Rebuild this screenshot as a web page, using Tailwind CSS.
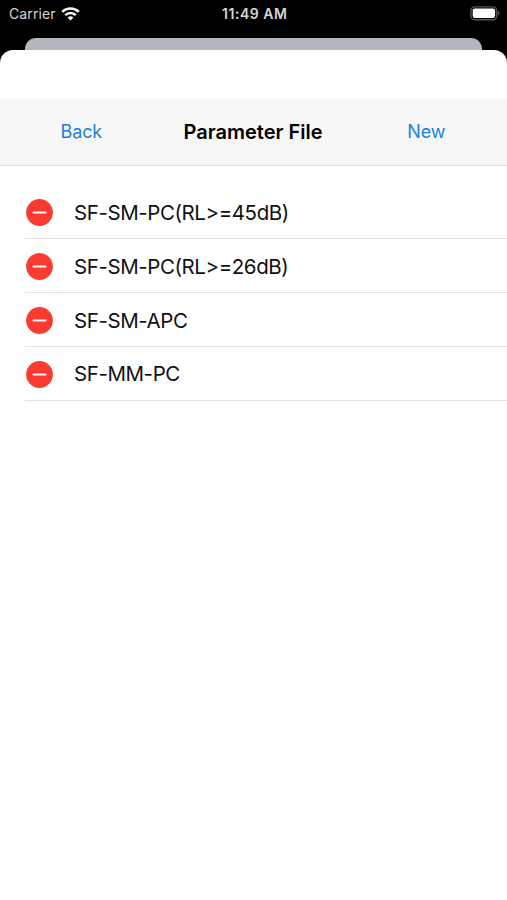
<!DOCTYPE html>
<html lang="en">
<head>
<meta charset="utf-8">
<title>Parameter File</title>
<script src="https://cdn.jsdelivr.net/npm/@tailwindcss/browser@4"></script>
</head>
<body class="bg-black">
<div class="flex h-[900px] w-[507px] flex-col overflow-hidden bg-black font-['Inter','Liberation_Sans',sans-serif] text-[#111]">
  <header class="grid h-[38px] shrink-0 grid-cols-3 pr-[6.5px] pl-[9px] text-[#d6d6d6]">
    <div class="flex h-[27px] items-center gap-[5.5px]">
      <span class="text-[14px] tracking-[0.1px]">Carrier</span>
      <svg class="h-[14px] w-[19px]" viewBox="0 0 19 14" fill="none" stroke="#f4f4f4" stroke-width="2.5">
        <path d="M1.2 4.9a11.8 11.8 0 0 1 16.6 0"/>
        <path d="M4.2 8.2a7.5 7.5 0 0 1 10.6 0"/>
        <path d="M9.5 13.5 6.6 10.6a4.1 4.1 0 0 1 5.8 0z" fill="#f4f4f4" stroke="none"/>
      </svg>
    </div>
    <div class="flex h-[26px] items-center justify-center text-[14px] font-semibold tracking-[0.55px]">11:49 AM</div>
    <div class="flex h-[27px] items-center justify-end">
      <svg class="h-[15px] w-[30px]" viewBox="0 0 30 15">
        <rect x="0.9" y="0.9" width="25.8" height="12.8" rx="3.8" fill="none" stroke="#555" stroke-width="1.4"/>
        <rect x="2.7" y="2.4" width="22.4" height="9.6" rx="2.2" fill="#fff"/>
        <path d="M28 5c1.8.6 1.8 4 0 4.6z" fill="#666"/>
      </svg>
    </div>
  </header>
  <div class="mx-[25px] h-[12px] shrink-0 rounded-t-[11px] bg-[#b4b6bd]"></div>
  <main class="flex-1 rounded-t-[13px] bg-white pt-[48px]">
    <nav class="flex h-[68px] items-center justify-between border-b border-[#dcdcdc] bg-[#f7f7f7] pr-[61.5px] pl-[60.5px]">
      <button class="w-[83px] text-left text-[18px] tracking-[-0.1px] text-[#1e80d6]">Back</button>
      <h1 class="text-[20px] font-semibold whitespace-nowrap text-black">Parameter File</h1>
      <button class="w-[83px] text-right text-[18px] tracking-[-0.1px] text-[#1e80d6]">New</button>
    </nav>
    <ul class="ml-[25px] pt-[19.5px] text-[20.5px] tracking-[-0.42px]">
      <li class="flex h-[53.9px] items-center gap-[21px] border-b border-[#e2e3e4] pt-[1.4px] pl-px">
        <svg class="size-[27px]" viewBox="0 0 27 27"><circle cx="13.5" cy="13.5" r="13.4" fill="#fb3b30"/><path d="M7.5 13.5h12" stroke="#fff" stroke-width="2" stroke-linecap="round"/></svg>
        <span class="pt-px">SF-SM-PC(RL&gt;=45dB)</span>
      </li>
      <li class="flex h-[53.9px] items-center gap-[21px] border-b border-[#e2e3e4] pt-[1.4px] pl-px">
        <svg class="size-[27px]" viewBox="0 0 27 27"><circle cx="13.5" cy="13.5" r="13.4" fill="#fb3b30"/><path d="M7.5 13.5h12" stroke="#fff" stroke-width="2" stroke-linecap="round"/></svg>
        <span class="pt-px">SF-SM-PC(RL&gt;=26dB)</span>
      </li>
      <li class="flex h-[53.9px] items-center gap-[21px] border-b border-[#e2e3e4] pt-[1.4px] pl-px">
        <svg class="size-[27px]" viewBox="0 0 27 27"><circle cx="13.5" cy="13.5" r="13.4" fill="#fb3b30"/><path d="M7.5 13.5h12" stroke="#fff" stroke-width="2" stroke-linecap="round"/></svg>
        <span class="pt-px">SF-SM-APC</span>
      </li>
      <li class="flex h-[53.9px] items-center gap-[21px] border-b border-[#e2e3e4] pt-[1.4px] pl-px">
        <svg class="size-[27px]" viewBox="0 0 27 27"><circle cx="13.5" cy="13.5" r="13.4" fill="#fb3b30"/><path d="M7.5 13.5h12" stroke="#fff" stroke-width="2" stroke-linecap="round"/></svg>
        <span class="pt-px">SF-MM-PC</span>
      </li>
    </ul>
  </main>
</div>
</body>
</html>
